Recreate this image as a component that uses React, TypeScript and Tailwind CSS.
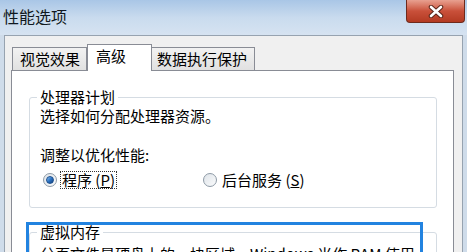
import React from "react"

const font = { fontFamily: '"Noto Sans CJK SC", "Noto Sans", sans-serif' }

function Radio({ checked }: { checked: boolean }) {
    return (
        <span className="w-[14px] h-[14px] rounded-full border border-[#8e9aa6] bg-gradient-to-br from-[#dfe4e9] to-[#fafbfc] flex items-center justify-center shrink-0">
            {checked && (
                <span className="w-[8px] h-[8px] rounded-full bg-gradient-to-br from-[#8cc2f2] via-[#2c74c4] to-[#133f80] border border-[#1d4f8c]" />
            )}
        </span>
    )
}

function GroupBox({ label, className, children }: { label: string, className?: string, children?: React.ReactNode }) {
    return (
        <div className={"border border-[#d5dce3] rounded-[3px] " + (className ?? "")}>
            <div className="-mt-[10px] ml-[7px] px-[3px] bg-white block w-fit h-[18px] leading-[18px] text-[15px]">{label}</div>
            {children}
        </div>
    )
}

export default function App() {
    return (
        <div className="w-[467px] h-[252px] overflow-hidden bg-[#cfdcea] flex flex-col text-black leading-[20px]" style={font}>
            <div className="h-[35px] shrink-0 flex justify-between items-start bg-gradient-to-b from-[#a9c6e6] via-[#c9dbee] to-[#d6e3f1]">
                <div className="pl-[3px] pt-[6px] text-[16px] leading-[20px] text-[#101820]">性能选项</div>
                <div className="mr-[2px] w-[59px] h-[23px] rounded-b-[4px] border border-t-0 border-[#6e2a1c] bg-gradient-to-b from-[#e8a090] via-[#c9503a] to-[#b33a22] flex items-center justify-center">
                    <svg width="16" height="13" viewBox="0 0 16 13">
                        <path d="M3 2 L13 11 M13 2 L3 11" stroke="#5a2418" strokeWidth="4.5" strokeLinecap="round" />
                        <path d="M3 2 L13 11 M13 2 L3 11" stroke="#ffffff" strokeWidth="2.6" strokeLinecap="round" />
                    </svg>
                </div>
            </div>
            <div className="flex-1 mx-[4px] border-l border-t border-r border-[#97a3b0] bg-[#f0f0f0] pt-[8px]">
                <div className="flex items-end h-[26px] pl-[7px]">
                    <div className="w-[75px] h-[23px] border border-b-0 border-[#898c95] bg-gradient-to-b from-[#f2f2f2] to-[#e1e1e1] text-[15px] leading-[21px] pl-[7px]">视觉效果</div>
                    <div className="relative z-10 w-[65px] h-[27px] -mb-px border border-b-0 border-[#898c95] bg-white text-[15px] leading-[22px] pl-[8px]">高级</div>
                    <div className="w-[103px] h-[23px] border border-b-0 border-l-0 border-[#898c95] bg-gradient-to-b from-[#f2f2f2] to-[#e1e1e1] text-[15px] leading-[21px] pl-[5px]">数据执行保护</div>
                </div>
                <div className="relative ml-[6px] w-[443px] h-[200px] border border-[#898c95] bg-white pt-[26px] pl-[17px] pr-[16px]">
                    <GroupBox label="处理器计划" className="pb-[17px]">
                        <div className="pl-[10px] text-[15px] leading-[20px]">选择如何分配处理器资源。</div>
                        <div className="mt-[19px] pl-[10px] text-[15px] leading-[20px]">调整以优化性能:</div>
                        <div className="mt-[5px] flex items-center h-[20px] text-[15px] leading-[20px]">
                            <div className="flex items-center ml-[13px] gap-[3px]">
                                <Radio checked={true} />
                                <span className="border border-dotted border-[#333] px-[1px] leading-[16px]">程序 (<u>P</u>)</span>
                            </div>
                            <div className="flex items-center ml-[86px] gap-[5px]">
                                <Radio checked={false} />
                                <span>后台服务 (<u>S</u>)</span>
                            </div>
                        </div>
                    </GroupBox>
                    <GroupBox label="虚拟内存" className="mt-[24px] h-[60px]">
                        <div className="mt-[3px] pl-[10px] text-[15px] leading-[20px] whitespace-nowrap">分页文件是硬盘上的一块区域，Windows 当作 RAM 使用。</div>
                    </GroupBox>
                    <div className="absolute left-[14px] top-[151px] w-[397px] h-[60px] border-[3px] border-[#2283e0] pointer-events-none" />
                </div>
            </div>
        </div>
    )
}
